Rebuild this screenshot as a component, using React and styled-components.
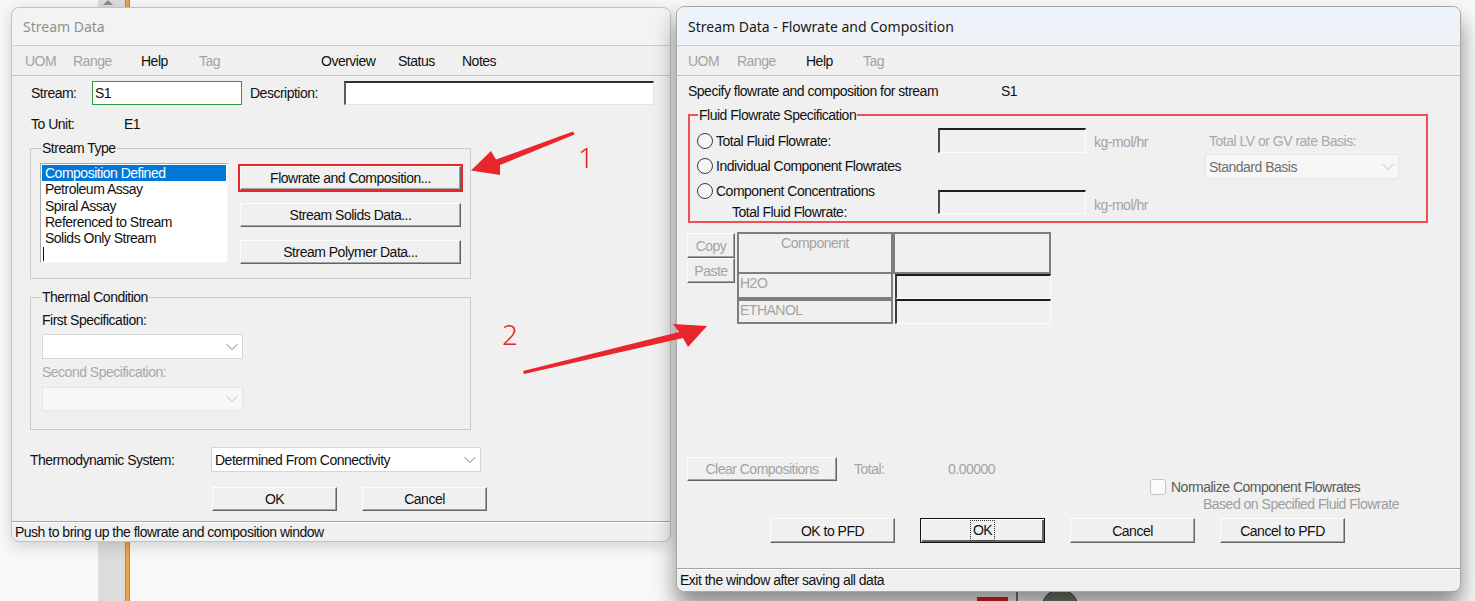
import React from 'react'
import styled, { createGlobalStyle, css } from 'styled-components'
import { ChevronDown } from 'lucide-react'

const UI_FONT = '"Liberation Sans", Arial, sans-serif'
const UI_SIZE = '14px'
const UI_TRACK = '-0.5px'
const TITLE_FONT = '"Noto Sans", "Open Sans", "Liberation Sans", sans-serif'
const GRAY = '#a3a3a3'

const GlobalStyle = createGlobalStyle`
  * { box-sizing: border-box; }
  html, body { margin: 0; padding: 0; }
  body {
    background: #f8f8f8;
    font-family: ${UI_FONT};
    font-size: ${UI_SIZE};
    letter-spacing: ${UI_TRACK};
    color: #111;
    overflow: hidden;
  }
`

const Desktop = styled.div`
  position: relative;
  width: 1475px;
  height: 601px;
  overflow: hidden;
  background: #f8f8f8;
`

const CanvasStrip = styled.div`
  position: absolute;
  left: 98px;
  top: 0;
  width: 27px;
  height: 100%;
  background: #dcdcdc;
`

const ScrollArrow = styled.div`
  position: absolute;
  left: 5px;
  top: 0;
  width: 0;
  height: 0;
  border-left: 5px solid transparent;
  border-right: 5px solid transparent;
  border-bottom: 5px solid #8c8c8c;
`

const OrangeWire = styled.div`
  position: absolute;
  left: 125px;
  top: 0;
  width: 5px;
  height: 100%;
  background: #eaa44c;
  border-left: 1px solid #c4853a;
  border-right: 1px solid #c4853a;
`

const Sketch = styled.svg`
  position: absolute;
  left: 970px;
  top: 584px;
`

const Window = styled.div`
  position: absolute;
  left: ${p => p.$x}px;
  top: ${p => p.$y}px;
  width: ${p => p.$w}px;
  height: ${p => p.$h}px;
  z-index: ${p => (p.$active ? 2 : 1)};
  display: flex;
  flex-direction: column;
  background: #f0f0f0;
  border: 1px solid ${p => (p.$active ? '#a7a7a7' : '#c2c2c2')};
  border-radius: 8px;
  overflow: hidden;
  box-shadow: ${p => (p.$active ? '0 14px 22px rgba(0,0,0,0.45)' : '0 4px 16px rgba(0,0,0,0.16)')};
`

const TitleBar = styled.div`
  flex: none;
  height: ${p => p.$h}px;
  display: flex;
  align-items: center;
  padding-left: 11px;
  font-family: ${TITLE_FONT};
  font-size: 14px;
  letter-spacing: 0;
  background: ${p => (p.$active ? '#eef2f9' : '#f3f3f3')};
  color: ${p => (p.$active ? '#1a1a1a' : '#8f8f8f')};
  border-bottom: 1px solid #cdcdcd;
`

const MenuBar = styled.div`
  flex: none;
  height: 30px;
  display: flex;
  align-items: center;
  padding-left: ${p => p.$pl}px;
  border-bottom: 1px solid #c3c3c3;
`

const MenuItem = styled.span`
  flex: none;
  width: ${p => (p.$w ? `${p.$w}px` : 'auto')};
  color: ${p => (p.$off ? GRAY : '#111')};
`

const Body = styled.div`
  flex: 1;
  display: flex;
  flex-direction: column;
  padding-left: ${p => p.$pl}px;
`

const StatusBar = styled.div`
  flex: none;
  height: ${p => p.$h}px;
  display: flex;
  align-items: center;
  padding-left: 3px;
  border-top: 1px solid #a5a5a5;
  box-shadow: inset 0 1px 0 #fdfdfd;
`

const Row = styled.div`
  flex: none;
  display: flex;
  align-items: center;
  height: ${p => p.$h}px;
  margin-top: ${p => p.$mt || 0}px;
  margin-left: ${p => p.$ml || 0}px;
  padding-left: ${p => p.$pl || 0}px;
  gap: ${p => p.$gap || 0}px;
`

const Label = styled.span`
  flex: none;
  width: ${p => (p.$w ? `${p.$w}px` : 'auto')};
  margin-left: ${p => p.$ml || 0}px;
  padding-left: ${p => p.$pl || 0}px;
  color: ${p => p.$color || '#111'};
  white-space: nowrap;
`

const TextBox = styled.div`
  flex: none;
  width: ${p => p.$w}px;
  height: ${p => p.$h || 24}px;
  display: flex;
  align-items: center;
  padding-left: 2px;
  ${p => p.$kind === 'focus' && css`
    background: #fff;
    border: 1px solid #2f9a37;
  `}
  ${p => p.$kind === 'sunken' && css`
    background: #fff;
    border-style: solid;
    border-width: 2px 1px 1px 2px;
    border-color: #2e2e2e #e4e4e4 #e4e4e4 #5c5c5c;
  `}
  ${p => p.$kind === 'off' && css`
    background: #f0f0f0;
    border-style: solid;
    border-width: 2px 1px 1px 2px;
    border-color: #1f1f1f #fbfbfb #fbfbfb #4a4a4a;
  `}
`

const GroupBox = styled.fieldset`
  flex: none;
  margin: ${p => p.$mt}px 0 0 0;
  padding: 0;
  min-width: 0;
  width: ${p => p.$w}px;
  border: ${p => (p.$red ? '2px solid #ee5054' : '1px solid #cbcbcb')};
`

const Legend = styled.legend`
  margin-left: ${p => p.$ml || 10}px;
  padding: 0 1px;
  line-height: 18px;
  color: #111;
`

const Btn = styled.button`
  flex: none;
  width: ${p => p.$w}px;
  height: ${p => p.$h || 24}px;
  padding: 0;
  font-family: ${UI_FONT};
  font-size: ${UI_SIZE};
  letter-spacing: ${UI_TRACK};
  color: ${p => (p.$off ? GRAY : '#111')};
  background: #f0f0f0;
  border: 1px solid;
  border-color: #fdfdfd #646464 #646464 #fdfdfd;
  box-shadow: inset -1px -1px 0 #a3a3a3;
  ${p => p.$flag && css`
    outline: 2px solid #e8262b;
    outline-offset: 0;
  `}
  ${p => p.$default && css`
    border-color: #111;
    box-shadow: inset 1px 1px 0 #fdfdfd, inset -2px -2px 0 #646464;
  `}
`

const FocusText = styled.span`
  display: inline-block;
  height: 19px;
  line-height: 19px;
  padding: 0 2px;
  outline: 1px dotted #333;
`

const TypeContent = styled.div`
  display: flex;
  padding: 6px 9px 14px 9px;
`

const ListBox = styled.div`
  flex: none;
  width: 188px;
  height: 100px;
  padding: 1px;
  background: #fff;
  border: 1px solid;
  border-color: #a9a9a9 #f4f4f4 #f4f4f4 #a9a9a9;
`

const ListItem = styled.div`
  height: 16.3px;
  line-height: 16px;
  padding-left: 3px;
  white-space: nowrap;
  background: ${p => (p.$selected ? '#0078d7' : 'transparent')};
  color: ${p => (p.$selected ? '#fff' : '#111')};
`

const Caret = styled.div`
  width: 1px;
  height: 14px;
  margin: 1px 0 0 1px;
  background: #111;
`

const ButtonStack = styled.div`
  display: flex;
  flex-direction: column;
  gap: 13px;
  margin-left: 12px;
  padding-top: 3px;
`

const ThermalContent = styled.div`
  display: flex;
  flex-direction: column;
  align-items: flex-start;
  padding: 5px 0 18px 11px;
`

const Stack = styled.div`
  margin-top: ${p => p.$mt || 0}px;
  line-height: 18px;
  color: ${p => p.$color || '#111'};
`

const SelectBox = styled.div`
  flex: none;
  width: ${p => p.$w}px;
  height: ${p => p.$h || 25}px;
  margin-top: ${p => p.$mt || 0}px;
  display: flex;
  align-items: center;
  justify-content: space-between;
  padding: 0 0 0 3px;
  background: ${p => (p.$off ? '#f7f7f7' : '#fff')};
  border: 1px solid ${p => (p.$off ? '#e6e6e6' : '#d7d7d7')};
  color: ${p => (p.$off ? '#6f6f6f' : '#111')};
  svg {
    color: ${p => (p.$off ? '#bdbdbd' : '#6f6f6f')};
  }
`

const Select = ({ children, ...rest }) => (
  <SelectBox {...rest}>
    <span>{children}</span>
    <ChevronDown size={20} strokeWidth={1.1} />
  </SelectBox>
)

/* Flowrate window */

const FluidGrid = styled.div`
  display: grid;
  grid-template-columns: 248px 148px 119px 194px;
  grid-template-rows: 25px 25px 25px 18px;
  padding-top: 4px;
`

const Cell = styled.div`
  grid-column: ${p => p.$col};
  grid-row: ${p => p.$row};
  display: flex;
  align-items: ${p => (p.$top ? 'flex-start' : 'center')};
  margin-top: ${p => p.$mt || 0}px;
  padding-left: ${p => p.$pl || 0}px;
  gap: 3px;
  color: ${p => p.$color || '#111'};
  white-space: nowrap;
`

const Radio = styled.span`
  flex: none;
  width: 16px;
  height: 16px;
  border-radius: 50%;
  border: 1px solid #3a3a3a;
  background: #f6f6f6;
`

const TableArea = styled.div`
  display: flex;
  margin: 9px 0 0 -1px;
`

const SideButtons = styled.div`
  display: flex;
  flex-direction: column;
  padding-top: 1px;
`

const CompGrid = styled.div`
  display: grid;
  grid-template-columns: 156px 158px;
  grid-template-rows: 42px 25px 25px;
  margin-left: 2px;
  color: ${GRAY};
`

const HeadCell = styled.div`
  border: 2px solid #7e7e7e;
  background: #f0f0f0;
  text-align: center;
  padding-top: 1px;
`

const NameCell = styled.div`
  border: 2px solid #7e7e7e;
  border-top-width: ${p => (p.$first ? 0 : 2)}px;
  line-height: 19px;
  padding-left: 1px;
`

const ValueCell = styled.div`
  margin-left: 2px;
  border-style: solid;
  border-width: 2px 1px 1px 2px;
  border-color: #1b1b1b #fbfbfb #fbfbfb #3c3c3c;
  background: #f0f0f0;
`

const ActionRow = styled.div`
  display: flex;
  align-items: flex-start;
  margin: 133px 0 0 -1px;
`

const ClearGroup = styled.div`
  flex: none;
  width: 463px;
  display: flex;
  align-items: center;
  height: 24px;
`

const NormalizeBlock = styled.div`
  margin-top: 22px;
  display: flex;
  flex-direction: column;
`

const CheckLine = styled.div`
  display: flex;
  align-items: center;
  gap: 5px;
  height: 16px;
  color: #5a5a5a;
`

const Check = styled.span`
  width: 16px;
  height: 16px;
  border: 1px solid #c4c4c4;
  border-radius: 3px;
  background: #fbfbfb;
`

const Footer = styled.div`
  display: flex;
  gap: 25px;
  margin-top: 5px;
  padding-left: 82px;
`

const Overlay = styled.svg`
  position: absolute;
  inset: 0;
  z-index: 5;
  pointer-events: none;
`

const Marker = styled.span`
  position: absolute;
  left: ${p => p.$x}px;
  top: ${p => p.$y}px;
  z-index: 5;
  font-family: ${TITLE_FONT};
  font-size: 28px;
  line-height: 28px;
  letter-spacing: 0;
  font-weight: 300;
  color: #e8262b;
`

const streamTypes = [
  'Composition Defined',
  'Petroleum Assay',
  'Spiral Assay',
  'Referenced to Stream',
  'Solids Only Stream',
]

const StreamDataWindow = () => (
  <Window $x={11} $y={7} $w={660} $h={535}>
    <TitleBar $h={38}>Stream Data</TitleBar>
    <MenuBar $pl={13}>
      <MenuItem $w={48} $off>UOM</MenuItem>
      <MenuItem $w={68} $off>Range</MenuItem>
      <MenuItem $w={58}>Help</MenuItem>
      <MenuItem $w={122} $off>Tag</MenuItem>
      <MenuItem $w={77}>Overview</MenuItem>
      <MenuItem $w={64}>Status</MenuItem>
      <MenuItem>Notes</MenuItem>
    </MenuBar>
    <Body $pl={18}>
      <Row $mt={5} $h={24}>
        <Label $w={62} $pl={1}>Stream:</Label>
        <TextBox $w={150} $kind="focus">S1</TextBox>
        <Label $w={94} $ml={8}>Description:</Label>
        <TextBox $w={310} $kind="sunken" />
      </Row>
      <Row $mt={9} $h={20}>
        <Label $w={94} $pl={1}>To Unit:</Label>
        <Label>E1</Label>
      </Row>

      <GroupBox $mt={5} $w={441}>
        <Legend>Stream Type</Legend>
        <TypeContent>
          <ListBox>
            {streamTypes.map((t, i) => (
              <ListItem key={t} $selected={i === 0}>{t}</ListItem>
            ))}
            <Caret />
          </ListBox>
          <ButtonStack>
            <Btn $w={221} $flag>Flowrate and Composition...</Btn>
            <Btn $w={221}>Stream Solids Data...</Btn>
            <Btn $w={221}>Stream Polymer Data...</Btn>
          </ButtonStack>
        </TypeContent>
      </GroupBox>

      <GroupBox $mt={9} $w={441}>
        <Legend>Thermal Condition</Legend>
        <ThermalContent>
          <Stack>First Specification:</Stack>
          <Select $w={201} $mt={5} />
          <Stack $mt={4} $color="#a8a8a8">Second Specification:</Stack>
          <Select $w={201} $h={24} $mt={6} $off />
        </ThermalContent>
      </GroupBox>

      <Row $mt={17} $h={25}>
        <Label $w={181}>Thermodynamic System:</Label>
        <Select $w={270}>Determined From Connectivity</Select>
      </Row>
      <Row $mt={15} $h={24} $pl={182} $gap={25}>
        <Btn $w={125}>OK</Btn>
        <Btn $w={125}>Cancel</Btn>
      </Row>
    </Body>
    <StatusBar $h={20}>Push to bring up the flowrate and composition window</StatusBar>
  </Window>
)

const FlowrateWindow = () => (
  <Window $x={676} $y={6} $w={785} $h={586} $active>
    <TitleBar $h={39} $active>Stream Data - Flowrate and Composition</TitleBar>
    <MenuBar $pl={11}>
      <MenuItem $w={49} $off>UOM</MenuItem>
      <MenuItem $w={69} $off>Range</MenuItem>
      <MenuItem $w={57}>Help</MenuItem>
      <MenuItem $off>Tag</MenuItem>
    </MenuBar>
    <Body $pl={11}>
      <Row $mt={6} $h={18}>
        <Label $w={313}>Specify flowrate and composition for stream</Label>
        <Label>S1</Label>
      </Row>

      <GroupBox $mt={6} $w={740} $red>
        <Legend $ml={8}>Fluid Flowrate Specification</Legend>
        <FluidGrid>
          <Cell $col={1} $row={1} $pl={7}>
            <Radio />Total Fluid Flowrate:
          </Cell>
          <Cell $col={2} $row={1}>
            <TextBox $w={148} $h={25} $kind="off" />
          </Cell>
          <Cell $col={3} $row={1} $pl={8} $mt={3} $color={GRAY}>kg-mol/hr</Cell>
          <Cell $col={4} $row={1} $pl={4} $mt={1} $color="#a8a8a8">Total LV or GV rate Basis:</Cell>

          <Cell $col={1} $row={2} $pl={7}>
            <Radio />Individual Component Flowrates
          </Cell>
          <Cell $col={4} $row={2}>
            <Select $w={194} $mt={2} $off>Standard Basis</Select>
          </Cell>

          <Cell $col={1} $row={3} $pl={7}>
            <Radio />Component Concentrations
          </Cell>
          <Cell $col={2} $row="3 / span 2" $top $mt={12}>
            <TextBox $w={148} $h={24} $kind="off" />
          </Cell>
          <Cell $col={3} $row="3 / span 2" $top $pl={8} $mt={19} $color={GRAY}>kg-mol/hr</Cell>

          <Cell $col={1} $row={4} $pl={42}>Total Fluid Flowrate:</Cell>
        </FluidGrid>
      </GroupBox>

      <TableArea>
        <SideButtons>
          <Btn $w={48} $h={25} $off>Copy</Btn>
          <Btn $w={48} $h={25} $off>Paste</Btn>
        </SideButtons>
        <CompGrid>
          <HeadCell>Component</HeadCell>
          <HeadCell />
          <NameCell $first>H2O</NameCell>
          <ValueCell />
          <NameCell>ETHANOL</NameCell>
          <ValueCell />
        </CompGrid>
      </TableArea>

      <ActionRow>
        <ClearGroup>
          <Btn $w={150} $off>Clear Compositions</Btn>
          <Label $w={94} $ml={17} $color={GRAY}>Total:</Label>
          <Label $color={GRAY}>0.00000</Label>
        </ClearGroup>
        <NormalizeBlock>
          <CheckLine>
            <Check />Normalize Component Flowrates
          </CheckLine>
          <Stack>
            <Label $pl={53} $color="#9d9d9d">Based on Specified Fluid Flowrate</Label>
          </Stack>
        </NormalizeBlock>
      </ActionRow>

      <Footer>
        <Btn $w={125} $h={25}>OK to PFD</Btn>
        <Btn $w={125} $h={25} $default><FocusText>OK</FocusText></Btn>
        <Btn $w={125} $h={25}>Cancel</Btn>
        <Btn $w={125} $h={25}>Cancel to PFD</Btn>
      </Footer>
    </Body>
    <StatusBar $h={23}>Exit the window after saving all data</StatusBar>
  </Window>
)

const Annotations = () => (
  <>
    <Overlay width="1475" height="601" viewBox="0 0 1475 601">
      <polygon
        fill="#e8262b"
        points="573,131.5 574.5,134.5 500,165 500,175 471,170.5 491,151 496,159.5"
      />
      <polygon
        fill="#e8262b"
        points="523,371 524,374 683,338 688,347 707,326 673,324 679,332"
      />
    </Overlay>
    <Marker $x={578} $y={143}>1</Marker>
    <Marker $x={502} $y={320}>2</Marker>
  </>
)

export default function App() {
  return (
    <>
      <GlobalStyle />
      <Desktop>
        <CanvasStrip>
          <ScrollArrow />
        </CanvasStrip>
        <OrangeWire />
        <Sketch width="120" height="17" viewBox="0 0 120 17">
          <rect x="7" y="13" width="31" height="4" fill="#e02020" />
          <path d="M32 6 L62 6 M47 6 L47 17" stroke="#222" strokeWidth="1.2" fill="none" />
          <ellipse cx="90" cy="20" rx="17" ry="14" fill="#6f7b6c" stroke="#3a3a3a" />
        </Sketch>
        <StreamDataWindow />
        <FlowrateWindow />
        <Annotations />
      </Desktop>
    </>
  )
}
